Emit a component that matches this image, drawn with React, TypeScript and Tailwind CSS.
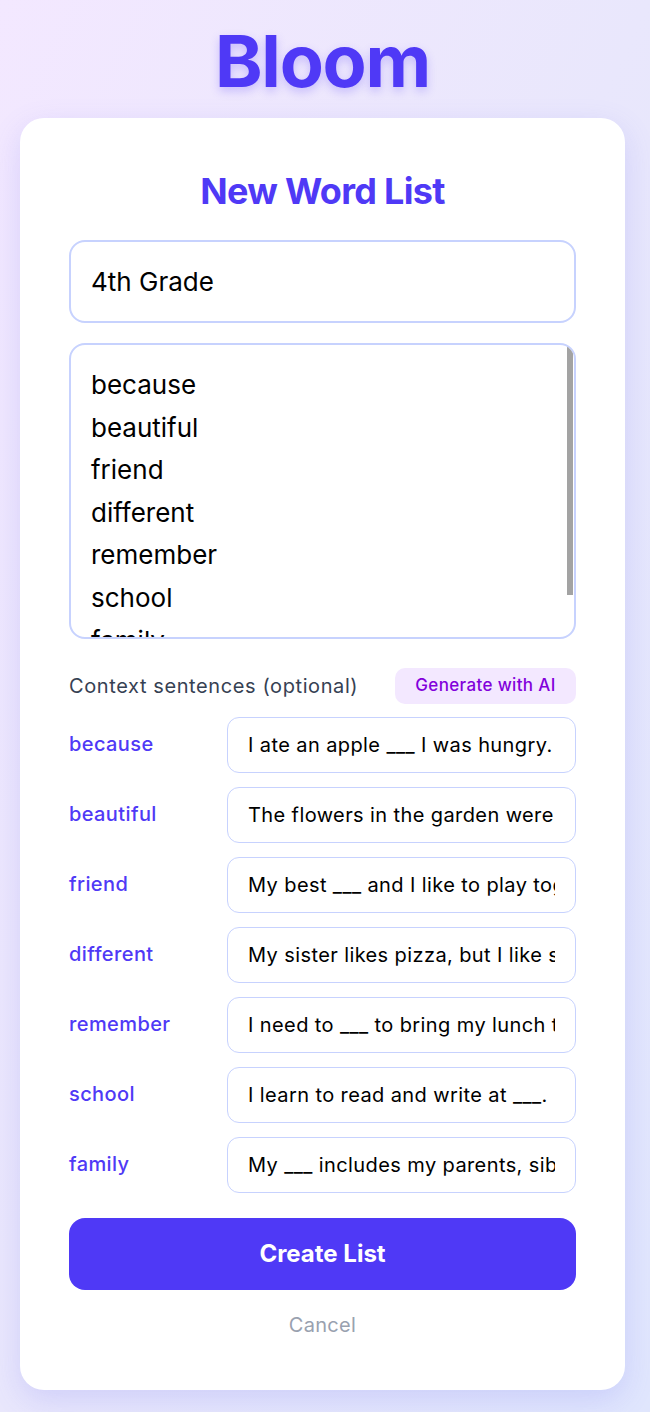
import React from "react";

const words = ["because", "beautiful", "friend", "different", "remember", "school", "family"];
const sentences = [
  "I ate an apple ___ I was hungry.",
  "The flowers in the garden were very beautiful today.",
  "My best ___ and I like to play together.",
  "My sister likes pizza, but I like something different.",
  "I need to ___ to bring my lunch to school.",
  "I learn to read and write at ___.",
  "My ___ includes my parents, siblings and grandparents.",
];

export default function App() {
  return (
    <div
      className="min-h-[1412px] w-full bg-linear-to-br from-[#f3e8ff] via-[#e9e7fc] to-[#e0e6fd] pl-5 pr-[25px] pt-[18px] pb-[22px]"
      style={{ fontFamily: "Inter, 'Noto Sans', sans-serif" }}
    >
      <h1 className="text-center text-[72px] font-bold leading-[86px] tracking-[-1.2px] text-[#4f39f6] [text-shadow:0_4px_10px_rgba(79,57,246,0.25)]">
        Bloom
      </h1>
      <div className="mt-[14px] rounded-[24px] bg-white px-[49px] pt-[50px] pb-[50px] shadow-[0_10px_30px_rgba(99,102,241,0.18)]">
        <h2 className="text-center text-[36px] font-bold leading-[46px] tracking-[-0.7px] text-[#4f39f6]">
          New Word List
        </h2>
        <div className="mt-[26px] flex h-[83px] items-center rounded-2xl border-2 border-[#c7d2fe] px-5 text-[26px] text-black">
          4th Grade
        </div>
        <div className="relative mt-5 h-[296px] overflow-hidden rounded-2xl border-2 border-[#c7d2fe] px-5 pt-[19px] text-[26px] leading-[42.6px] text-black">
          {words.map((w) => (
            <div key={w}>{w}</div>
          ))}
          <div className="absolute right-[1px] top-[1px] h-[249px] w-[6px] bg-[#a3a3a3]" />
        </div>
        <div className="mt-[29px] flex items-center justify-between">
          <span className="text-[20px] tracking-[0.6px] text-[#364153]">Context sentences (optional)</span>
          <button className="flex h-9 w-[181px] items-center justify-center rounded-[10px] bg-[#f3e8ff] text-[17px] font-medium tracking-[0.35px] text-[#8200db]">
            Generate with AI
          </button>
        </div>
        <div className="mt-[13px] flex flex-col gap-[14px]">
          {words.map((w, i) => (
            <div key={w} className="flex items-center gap-4">
              <span className="w-[142px] shrink-0 -translate-y-[1px] text-[20px] font-medium tracking-[0.4px] text-[#4f39f6]">
                {w}
              </span>
              <input
                readOnly
                value={sentences[i]}
                className="h-[56px] min-w-0 flex-1 rounded-xl border-[1.5px] border-[#c7d2fe] bg-white px-5 text-[20px] tracking-[0.4px] text-black outline-none"
              />
            </div>
          ))}
        </div>
        <button className="mt-[25px] flex h-[72px] w-full items-center justify-center rounded-2xl bg-[#4f39f6] text-[24px] font-bold text-white">
          Create List
        </button>
        <div className="mt-[20px] text-center text-[20px] tracking-[0.3px] text-[#99a1af]">Cancel</div>
      </div>
    </div>
  );
}
